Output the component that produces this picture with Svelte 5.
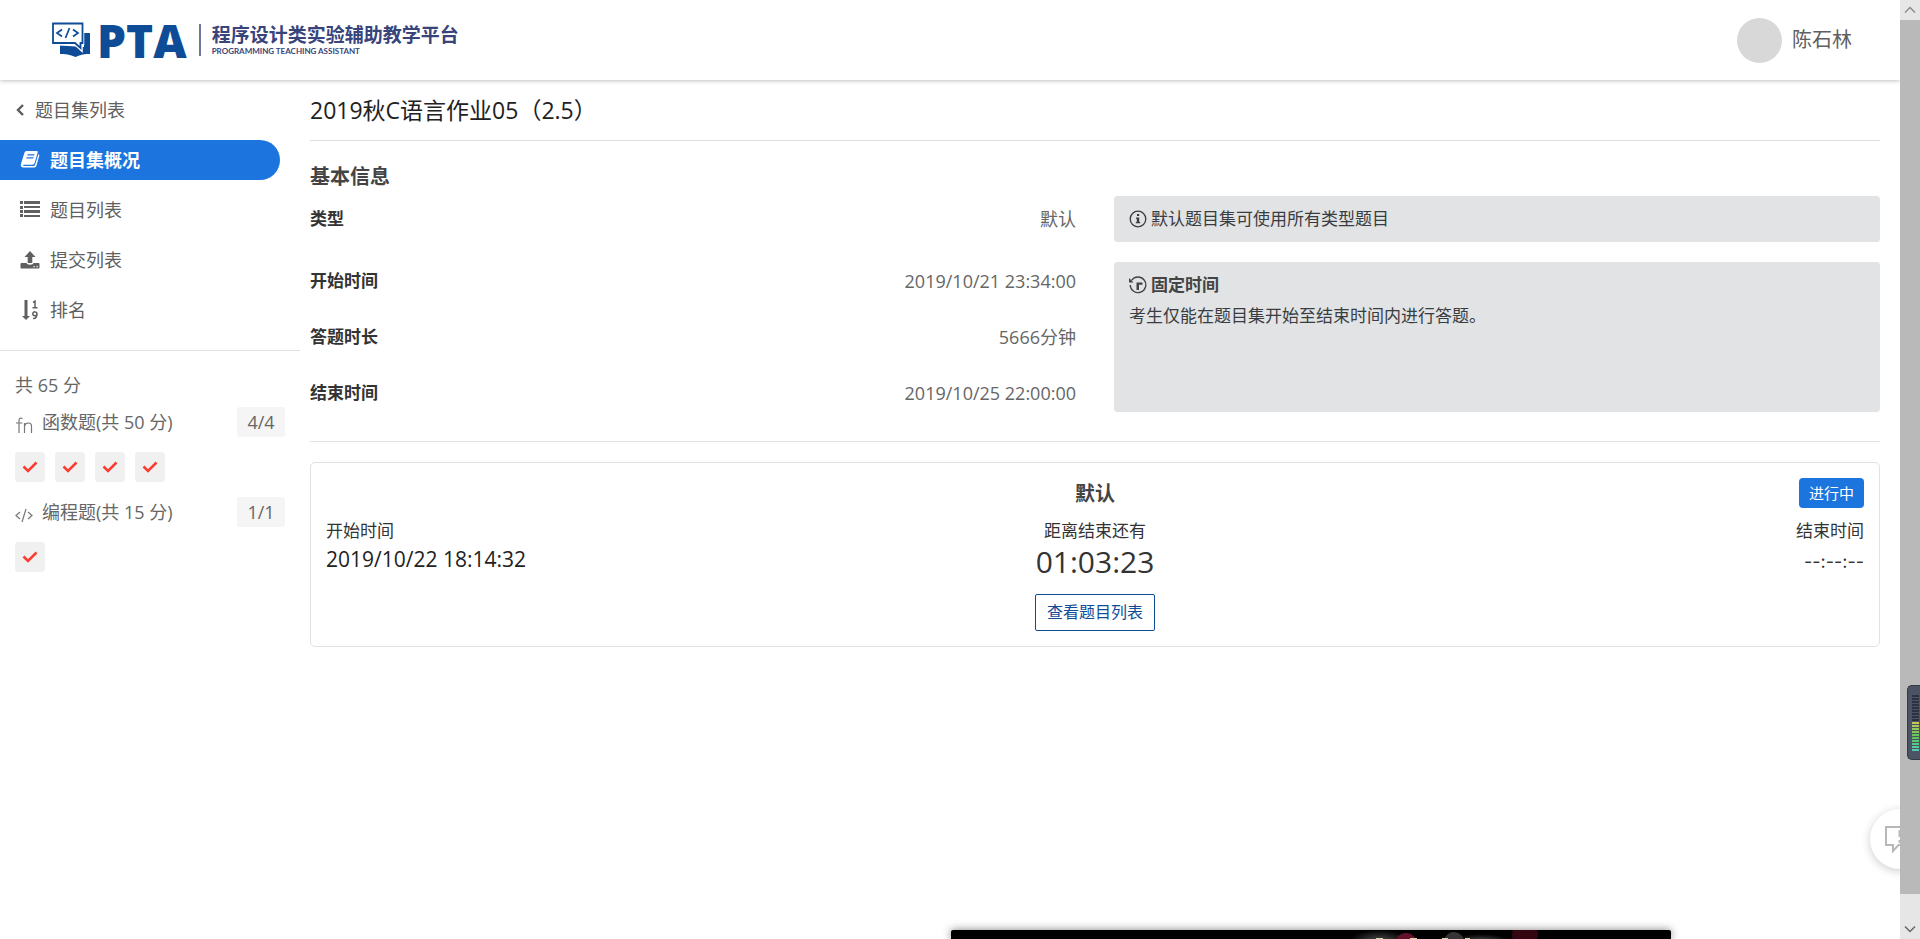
<script>
  const nav = [
    { label: '题目集概况', icon: 'book', active: true },
    { label: '题目列表', icon: 'list' },
    { label: '提交列表', icon: 'upload' },
    { label: '排名', icon: 'sort' }
  ];
  const groups = [
    { icon: 'fn', label: '函数题(共 50 分)', score: '4/4', problems: [1, 2, 3, 4] },
    { icon: 'code', label: '编程题(共 15 分)', score: '1/1', problems: [1] }
  ];
  const times = [
    { label: '开始时间', value: '2019/10/21 23:34:00' },
    { label: '答题时长', value: '5666分钟' },
    { label: '结束时间', value: '2019/10/25 22:00:00' }
  ];
  const bars = Array.from({ length: 19 }, (_, i) => i);
  const barColor = (i) => (i < 9 ? '#2c323f' : `hsl(${62 + (i - 9) * 12}, 50%, 56%)`);
</script>

<header>
  <a class="logo" href="#home" aria-label="PTA">
    <svg width="40" height="38" viewBox="0 0 40 38">
      <path d="M9 24.500v8.500c5 0 10 .5 15.500 3 5-2.500 10-3 14.500-3V12h-6v14z" fill="#0f4c97" />
      <path d="M1.500 2.500h30v20h-1.500v5.500l-6-5.500h-22.500z" fill="#fff" stroke="#fff" stroke-width="3.500" />
      <path d="M2 2.500h29.500v19.500h-2v5l-5.500-5h-22z" fill="#fff" stroke="#0f4c97" stroke-width="1.800" />
      <path d="M11 8.500l-5 3.500 5 3.500M22 8.500l5 3.500-5 3.500M18.500 7l-4 10" fill="none" stroke="#0f4c97" stroke-width="1.700" />
    </svg>
    <span class="pta">PTA</span>
    <span class="tagline">
      <strong>程序设计类实验辅助教学平台</strong>
      <small>PROGRAMMING TEACHING ASSISTANT</small>
    </span>
  </a>
  <a class="user" href="#user"><span class="avatar"></span>陈石林</a>
</header>

<div class="layout">
  <aside>
    <a class="back" href="#sets">
      <svg width="10" height="14" viewBox="0 0 10 14"><path d="M8 2L3 7l5 5" fill="none" stroke="#5c5c5c" stroke-width="2.400" /></svg>
      题目集列表
    </a>
    <nav>
      {#each nav as item}
        <a class:active={item.active} href="#{item.icon}">
          <svg width="20" height="20" viewBox="0 0 20 20" fill="currentColor">
            {#if item.icon === 'book'}
              <path fill-rule="evenodd" d="M6.500 1h10c1 0 1.500.7 1.200 1.600L14.600 13c-.4 1.200-1 1.700-2.200 1.700H3.700c-.8 0-.8 1.300.2 1.300h9.600c.8 0 1.300-.4 1.600-1.200L18.400 4.200c1 .4 1.100 1 .8 1.900L16.500 15.500c-.4 1.400-1.300 2.100-2.700 2.100H3.500C1.500 17.600.2 15.800.9 14L4.300 3.200C4.800 1.800 5.400 1 6.500 1zM7.600 4.300l-.4 1.300h7l.4-1.300zM6.700 7.300l-.4 1.300h7l.4-1.300z" />
            {:else if item.icon === 'list'}
              <path d="M0 1h3v3H0zM0 6h3v3H0zM0 10h3v3H0zM0 14h3v3H0zM4 1h16v3H4zM4 6h16v2H4zM4 10h16v3H4zM4 15h16v2H4z" />
            {:else if item.icon === 'upload'}
              <path d="M10 1l5.500 6h-3.200v6H7.700V7H4.500z" />
              <path fill-rule="evenodd" d="M1.500 13h5c.4 1.300 1.500 1.700 3.500 1.700s3.100-.4 3.500-1.700h5c.5 0 1 .4 1 1v3.500c0 .6-.4 1-1 1h-17c-.6 0-1-.4-1-1V14c0-.6.500-1 1-1zM13.500 16v1.200h1.200V16zM16.500 16v1.200h1.200V16z" />
            {:else}
              <path d="M4.500 0h3v16H10L6 20l-4-4h2.500z" />
              <path d="M13 2.500L15 1v6.500M12.500 7.700h5M17 14.300c0-3.200-4.200-3.100-4.200-.5 0 2.700 4.200 2.500 4.200.2 0 3.200-1.300 4.800-4 4.500" fill="none" stroke="currentColor" stroke-width="1.500" />
            {/if}
          </svg>
          {item.label}
        </a>
      {/each}
    </nav>
    <section class="scores">
      <p>共 65 分</p>
      {#each groups as group}
        <div class="group">
          <svg width="18" height="18" viewBox="0 0 18 18" fill="none" stroke="#777" stroke-width="1.200">
            {#if group.icon === 'fn'}
              <path d="M7.500 2.500C5 1.500 4 2.500 4 5v12M1 7h6.500M9.500 17V7M9.500 10c1-4 7-4 7 0v7" />
            {:else}
              <path d="M5 6L1 9.500 5 13M13 6l4 3.500-4 3.500M11 3L7 16" />
            {/if}
          </svg>
          <span>{group.label}</span>
          <b>{group.score}</b>
        </div>
        <div class="checks">
          {#each group.problems as n}
            <button aria-label="{group.label} {n}">
              <svg width="16" height="14" viewBox="0 0 16 14"><path d="M1.500 6.500l4.500 4.500 8.500-8.500" fill="none" stroke="#ff3b30" stroke-width="2.500" /></svg>
            </button>
          {/each}
        </div>
      {/each}
    </section>
  </aside>

  <main>
    <h1>2019秋C语言作业05（2.5）</h1>
    <h2>基本信息</h2>
    <div class="info">
      <div class="row"><b>类型</b><span>默认</span></div>
      <div class="note">
        <p>
          <svg width="18" height="18" viewBox="0 0 18 18"><circle cx="9" cy="9" r="7.800" fill="none" stroke="#383d41" stroke-width="1.300" /><path d="M8 4h2.200v2H8zM7 7.500h3.200V12h1v1.300H6.800V12h1V8.800H7z" fill="#383d41" /></svg>
          默认题目集可使用所有类型题目
        </p>
      </div>
      <div class="times">
        {#each times as t}
          <div class="row"><b>{t.label}</b><span>{t.value}</span></div>
        {/each}
      </div>
      <div class="note tall">
        <p>
          <svg width="18" height="18" viewBox="0 0 18 18"><path d="M2.500 4.500a7.800 7.800 0 1 1-1.300 4.500" fill="none" stroke="#444" stroke-width="1.300" /><path d="M0 2v4.500h4.500z" fill="#444" /><path d="M7.500 14V6.500h6v2.300H10V14z" fill="#444" /></svg>
          <b>固定时间</b>
        </p>
        <p>考生仅能在题目集开始至结束时间内进行答题。</p>
      </div>
    </div>

    <section class="card">
      <div class="side">
        <span>开始时间</span>
        <span class="clock">2019/10/22 18:14:32</span>
      </div>
      <div class="center">
        <h3>默认</h3>
        <span>距离结束还有</span>
        <span class="countdown">01:03:23</span>
        <button>查看题目列表</button>
      </div>
      <div class="side end">
        <span class="status">进行中</span>
        <span>结束时间</span>
        <span class="dashes">--:--:--</span>
      </div>
    </section>
  </main>
</div>

<button class="feedback" aria-label="反馈">
  <svg width="30" height="30" viewBox="0 0 30 30" fill="none" stroke="#b8b8b8" stroke-width="2"><path d="M1 3h28v18H13.500L8 27v-6H1z" /><path d="M15 6v7M15 16v3" stroke-width="3" /></svg>
</button>

<div class="scrollbar">
  <svg width="20" height="20" viewBox="0 0 20 20"><path d="M5 12.500l5-5 5 5" fill="none" stroke="#8c8c8c" stroke-width="1.500" /></svg>
  <div class="thumb"></div>
  <svg width="20" height="20" viewBox="0 0 20 20"><path d="M5 7.500l5 5 5-5" fill="none" stroke="#666" stroke-width="1.500" /></svg>
</div>

<div class="meter">
  {#each bars as i}
    <i style="background: {barColor(i)}"></i>
  {/each}
</div>

<div class="player">
  <svg width="720" height="9" viewBox="0 0 720 9">
    <defs><radialGradient id="glow"><stop offset="0" stop-color="#555" /><stop offset="1" stop-color="#000" /></radialGradient></defs>
    <ellipse cx="428" cy="12" rx="30" ry="12" fill="url(#glow)" />
    <ellipse cx="530" cy="12" rx="30" ry="8" fill="url(#glow)" />
    <circle cx="455" cy="14" r="11" fill="#641229" />
    <circle cx="503" cy="12" r="10" fill="#353535" />
    <circle cx="574" cy="5" r="13" fill="#330611" />
    <path d="M425 8h7v1h-7zM459 8h7v1h-7zM491 8h6v1h-6zM514 8h5v1h-5z" fill="#d6d6a8" />
  </svg>
</div>

<style>
  :global(body) {
    margin: 0;
    overflow: hidden;
    background: #fff;
  }
  :global(#app) {
    color: #333;
    font: 17px/26px "Open Sans", "Noto Sans CJK SC", sans-serif;
    padding-right: 20px;
  }
  p, h1, h2, h3 { margin: 0; }
  a { color: #606060; text-decoration: none; }
  svg { display: block; flex: none; }
  header {
    display: flex;
    justify-content: space-between;
    align-items: center;
    height: 80px;
    padding: 0 48px 0 51px;
    box-shadow: 0 1px 4px rgba(0, 0, 0, 0.25);
  }
  .logo { display: flex; align-items: center; }
  .pta {
    margin-left: 6px;
    color: #0f4c97;
    font-size: 46px;
    line-height: 32px;
    font-weight: 800;
  }
  .tagline {
    display: flex;
    flex-direction: column;
    margin-left: 12px;
    padding-left: 11px;
    border-left: 2px solid #6c7aa0;
    color: #38447a;
  }
  .tagline strong { font-size: 19px; line-height: 22px; }
  .tagline small { font: 8px/10px Lato, sans-serif; font-weight: 700; }
  .user { display: flex; align-items: center; gap: 10px; font-size: 20px; }
  .avatar { width: 45px; height: 45px; border-radius: 50%; background: #d8d8d8; }
  .layout { display: flex; }
  aside { flex: 0 0 300px; font-size: 18px; }
  .back { display: flex; align-items: center; gap: 10px; height: 60px; padding-left: 15px; }
  nav {
    display: flex;
    flex-direction: column;
    gap: 10px;
    padding: 0 20px 20px 0;
    border-bottom: 1px solid #e2e2e2;
  }
  nav a { display: flex; align-items: center; gap: 10px; height: 40px; padding-left: 20px; }
  nav .active { color: #fff; font-weight: 700; background: #1c74de; border-radius: 0 20px 20px 0; }
  .scores { padding: 20px 15px; color: #666; }
  .scores p { line-height: 28px; margin-bottom: 8px; }
  .group { display: flex; align-items: center; gap: 9px; height: 30px; }
  .group svg { margin-top: 6px; }
  .group b {
    margin-left: auto;
    padding: 0 10px;
    min-width: 28px;
    text-align: center;
    font-weight: 400;
    line-height: 30px;
    background: #f5f5f5;
    border-radius: 3px;
  }
  .checks { display: flex; gap: 10px; padding: 15px 0; }
  .checks button {
    display: flex;
    align-items: center;
    justify-content: center;
    width: 30px;
    height: 30px;
    padding: 0;
    border: 0;
    border-radius: 3px;
    background: #f0f0f0;
  }
  main { flex: 1; padding: 0 20px 0 10px; }
  h1 {
    color: #212121;
    font-size: 23px;
    font-weight: 400;
    line-height: 60px;
    border-bottom: 1px solid #ddd;
  }
  h2 { margin-top: 20px; color: #444; font-size: 20px; line-height: 32px; }
  .info {
    display: grid;
    grid-template-columns: 1fr 1fr;
    gap: 20px 38px;
    padding: 3px 0 29px;
    border-bottom: 1px solid #e2e2e2;
  }
  .row { display: flex; justify-content: space-between; align-items: center; min-height: 38px; }
  .row span { color: #666; font-size: 18px; }
  .times { display: flex; flex-direction: column; gap: 18px; }
  .note {
    padding: 9px 14px;
    color: #383d41;
    background: #e2e3e5;
    border: 1px solid #e2e3e5;
    border-radius: 3px;
  }
  .note p { display: flex; align-items: center; gap: 4px; }
  .note p + p { margin-top: 5px; }
  .tall b { color: #444; }
  .card {
    display: grid;
    grid-template-columns: 1fr auto 1fr;
    margin-top: 20px;
    padding: 15px;
    border: 1px solid #e2e2e2;
    border-radius: 5px;
  }
  .side, .center { display: flex; flex-direction: column; align-items: flex-start; }
  .side { padding-top: 40px; }
  .center { align-items: center; }
  .end { padding-top: 0; align-items: flex-end; }
  h3 { margin-bottom: 8px; color: #444; font-size: 20px; line-height: 32px; }
  .clock { font-size: 21px; line-height: 30px; color: #222; }
  .countdown { font-size: 30px; line-height: 36px; }
  .center button {
    margin-top: 14px;
    padding: 5px 11px;
    color: #0f4c97;
    font: 16px/25px "Open Sans", "Noto Sans CJK SC", sans-serif;
    background: #fff;
    border: 1px solid #0f4c97;
    border-radius: 2px;
  }
  .status {
    margin-bottom: 10px;
    padding: 0 10px;
    color: #fff;
    font-size: 15px;
    line-height: 30px;
    background: #1c74de;
    border-radius: 4px;
  }
  .dashes { font: 18px/36px Inter, sans-serif; }
  .feedback {
    position: fixed;
    right: -10px;
    bottom: 70px;
    width: 60px;
    height: 60px;
    padding: 0 0 0 15px;
    border: 0;
    border-radius: 50%;
    background: #fff;
    box-shadow: 0 2px 10px rgba(0, 0, 0, 0.2);
  }
  .scrollbar {
    position: fixed;
    inset: 0 0 0 auto;
    display: flex;
    flex-direction: column;
    width: 20px;
    background: #e6e6e6;
  }
  .thumb { flex: 1; margin-bottom: 25px; background: #b9b9b9; }
  .meter {
    position: fixed;
    right: 0;
    bottom: 179px;
    display: flex;
    flex-direction: column;
    gap: 1px;
    padding: 9px 1px 8px 4px;
    border: 1px solid #333947;
    border-right: 0;
    border-radius: 5px 0 0 5px;
    background: #4b5365;
  }
  .meter i { width: 7px; height: 2px; }
  .player {
    position: fixed;
    left: 951px;
    bottom: 0;
    height: 9px;
    overflow: hidden;
    background: #000;
    border-radius: 2px 2px 0 0;
    box-shadow: 0 0 8px rgba(0, 0, 0, 0.5);
  }
</style>
